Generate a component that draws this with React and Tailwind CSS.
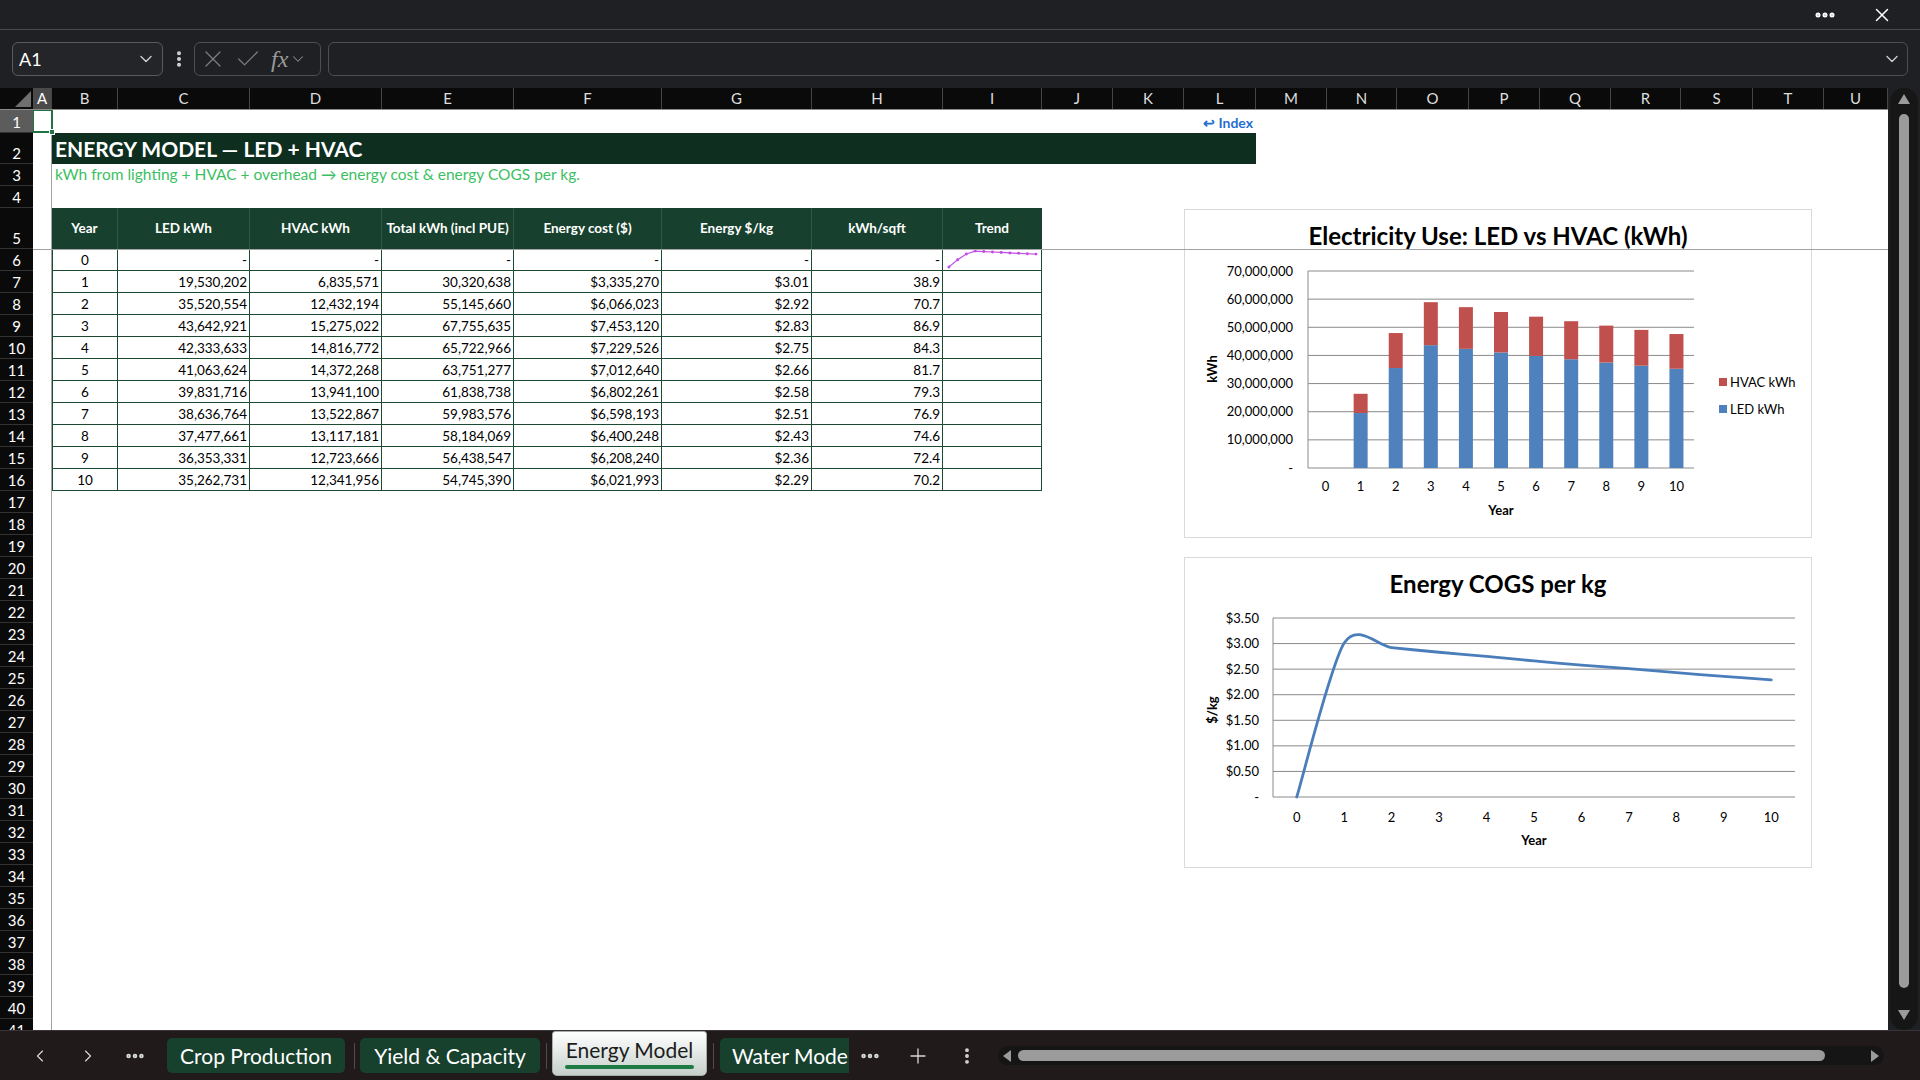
import { ChevronDown, ChevronLeft, ChevronRight, X, Check, Ellipsis, EllipsisVertical, Plus } from 'lucide-react';

const YEARS = [0, 1, 2, 3, 4, 5, 6, 7, 8, 9, 10];
const LED = [0, 19530202, 35520554, 43642921, 42333633, 41063624, 39831716, 38636764, 37477661, 36353331, 35262731];
const HVAC = [0, 6835571, 12432194, 15275022, 14816772, 14372268, 13941100, 13522867, 13117181, 12723666, 12341956];
const TOTAL = [0, 30320638, 55145660, 67755635, 65722966, 63751277, 61838738, 59983576, 58184069, 56438547, 54745390];
const COST = [0, 3335270, 6066023, 7453120, 7229526, 7012640, 6802261, 6598193, 6400248, 6208240, 6021993];
const PER_KG = [0, 3.01, 2.92, 2.83, 2.75, 2.66, 2.58, 2.51, 2.43, 2.36, 2.29];
const PER_SQFT = [0, 38.9, 70.7, 86.9, 84.3, 81.7, 79.3, 76.9, 74.6, 72.4, 70.2];

const fmtInt = n => (n === 0 ? '-' : n.toLocaleString('en-US'));
const fmtMoney = n => (n === 0 ? '-' : '$' + n.toLocaleString('en-US'));
const fmtKg = n => (n === 0 ? '-' : '$' + n.toFixed(2));
const fmtSqft = n => (n === 0 ? '-' : n.toFixed(1));

const COLUMNS = [
  { name: 'A', w: 'w-[19px]' },
  { name: 'B', w: 'w-[66px]' },
  { name: 'C', w: 'w-[132px]' },
  { name: 'D', w: 'w-[132px]' },
  { name: 'E', w: 'w-[132px]' },
  { name: 'F', w: 'w-[148px]' },
  { name: 'G', w: 'w-[150px]' },
  { name: 'H', w: 'w-[131px]' },
  { name: 'I', w: 'w-[99px]' },
  { name: 'J', w: 'w-[71px]' },
  { name: 'K', w: 'w-[71px]' },
  { name: 'L', w: 'w-[72px]' },
  { name: 'M', w: 'w-[71px]' },
  { name: 'N', w: 'w-[70px]' },
  { name: 'O', w: 'w-[72px]' },
  { name: 'P', w: 'w-[71px]' },
  { name: 'Q', w: 'w-[71px]' },
  { name: 'R', w: 'w-[70px]' },
  { name: 'S', w: 'w-[72px]' },
  { name: 'T', w: 'w-[71px]' },
  { name: 'U', w: 'w-[64px]' },
];

const ROW_HEIGHTS = { 1: 'h-[23px]', 2: 'h-[31px]', 5: 'h-[41px]' };
const ROW_NUMBERS = Array.from({ length: 41 }, (_, i) => i + 1);

const TABLE_COLS = [
  { label: 'Year', w: 'w-[66px]' },
  { label: 'LED kWh', w: 'w-[132px]' },
  { label: 'HVAC kWh', w: 'w-[132px]' },
  { label: 'Total kWh (incl PUE)', w: 'w-[132px]' },
  { label: 'Energy cost ($)', w: 'w-[148px]' },
  { label: 'Energy $/kg', w: 'w-[150px]' },
  { label: 'kWh/sqft', w: 'w-[131px]' },
  { label: 'Trend', w: 'w-[99px]' },
];

// catmull-rom style smoothing, close to Excel's "smoothed line"
function smoothPath(pts, k = 0.14) {
  let d = `M${pts[0][0]},${pts[0][1]}`;
  for (let i = 0; i < pts.length - 1; i++) {
    const p0 = pts[i - 1] || pts[i];
    const p1 = pts[i];
    const p2 = pts[i + 1];
    const p3 = pts[i + 2] || p2;
    const c1 = [p1[0] + (p2[0] - p0[0]) * k, p1[1] + (p2[1] - p0[1]) * k];
    const c2 = [p2[0] - (p3[0] - p1[0]) * k, p2[1] - (p3[1] - p1[1]) * k];
    d += ` C${c1[0]},${c1[1]} ${c2[0]},${c2[1]} ${p2[0]},${p2[1]}`;
  }
  return d;
}

function TitleBar() {
  return (
    <div className="h-[30px] shrink-0 flex items-center justify-end pr-[27px] gap-[34px] border-b border-[#4a4a4a]">
      <Ellipsis size={24} strokeWidth={3} className="text-white" />
      <X size={22} strokeWidth={1.6} className="text-white" />
    </div>
  );
}

function FormulaBar() {
  return (
    <div className="h-[58px] shrink-0 flex items-center px-[12px]">
      <div className="w-[151px] h-[34px] rounded-[6px] border border-[#5a5a5a] bg-[#242528] flex items-center justify-between pl-[6px] pr-[6px]">
        <span className="text-[18px] text-white">A1</span>
        <ChevronDown size={20} strokeWidth={1.6} className="text-[#d0d0d0]" />
      </div>
      <EllipsisVertical size={20} strokeWidth={2.8} className="ml-[6px] text-[#d8d8d8]" />
      <div className="ml-[5px] w-[127px] h-[34px] rounded-[6px] border border-[#4e4e4e] flex items-center pl-[4px]">
        <X size={28} strokeWidth={1.1} className="text-[#7d7d7d]" />
        <Check size={28} strokeWidth={1.1} className="ml-[7px] text-[#7d7d7d]" />
        <span className="ml-[9px] text-[24px] italic font-['Liberation_Serif',serif] text-[#9a9a9a] leading-none">fx</span>
        <ChevronDown size={18} strokeWidth={1.4} className="ml-[1px] text-[#8a8a8a]" />
      </div>
      <div className="ml-[7px] flex-1 h-[34px] rounded-[6px] border border-[#4e4e4e] flex items-center justify-end pr-[5px]">
        <ChevronDown size={20} strokeWidth={1.6} className="text-[#cfcfcf]" />
      </div>
    </div>
  );
}

function ColumnHeaders() {
  return (
    <div className="h-[22px] shrink-0 flex bg-[#0a0a0a] border-b border-[#8a8a8a]">
      <div className="w-[33px] shrink-0 flex items-end justify-end pr-[2px] pb-[2px]">
        <svg width="16" height="16" viewBox="0 0 16 16">
          <polygon points="16,0 16,16 0,16" fill="#6f6f6f" />
        </svg>
      </div>
      {COLUMNS.map(c => (
        <div
          key={c.name}
          className={`${c.w} shrink-0 flex items-center justify-center text-[15px] border-r border-[#454545] ${
            c.name === 'A' ? 'bg-[#4a4a4a] text-white' : 'text-[#dedede]'
          }`}
        >
          {c.name}
        </div>
      ))}
    </div>
  );
}

function RowHeaders() {
  return (
    <div className="w-[33px] shrink-0 flex flex-col bg-[#0a0a0a]">
      {ROW_NUMBERS.map(n => (
        <div
          key={n}
          className={`${ROW_HEIGHTS[n] || 'h-[22px]'} shrink-0 flex items-end justify-center pb-[1px] text-[15px] leading-[18px] border-b border-[#333333] ${
            n === 1 ? 'bg-[#5c5c5c] text-white' : 'text-white'
          }`}
        >
          {n}
        </div>
      ))}
    </div>
  );
}

function Sparkline({ values }) {
  const max = Math.max(...values);
  const pts = values.map((v, i) => [6 + i * 8.8, 19 - (v / max) * 16]);
  return (
    <svg width="97" height="21" viewBox="0 0 97 21">
      <polyline points={pts.map(p => p.join(',')).join(' ')} fill="none" stroke="#c24be6" strokeWidth="1.2" />
      {pts.map((p, i) => (
        <circle key={i} cx={p[0]} cy={p[1]} r="1.5" fill="#c24be6" />
      ))}
    </svg>
  );
}

function EnergyTable() {
  const rows = YEARS.map(y => [
    String(y),
    fmtInt(LED[y]),
    fmtInt(HVAC[y]),
    fmtInt(TOTAL[y]),
    fmtMoney(COST[y]),
    fmtKg(PER_KG[y]),
    fmtSqft(PER_SQFT[y]),
  ]);

  return (
    <div className="w-[990px] flex flex-col">
      <div className="h-[41px] flex bg-[#17412e]">
        {TABLE_COLS.map((c, i) => (
          <div
            key={c.label}
            className={`${c.w} shrink-0 flex items-center justify-center text-[13.5px] font-bold text-white whitespace-nowrap border-r ${
              i === TABLE_COLS.length - 1 ? 'border-[#17412e]' : 'border-[#2d5c44]'
            }`}
          >
            {c.label}
          </div>
        ))}
      </div>
      {rows.map((r, ri) => (
        <div key={ri} className="h-[22px] flex">
          {TABLE_COLS.map((c, ci) => (
            <div
              key={c.label}
              className={`${c.w} shrink-0 flex items-end pb-[1px] text-[13.5px] leading-[18px] text-black border-r border-b border-[#1d4a33] ${
                ci === 0 ? 'border-l justify-center' : 'justify-end pr-[2px]'
              }`}
            >
              {ci < 7 ? r[ci] : ri === 0 ? <Sparkline values={PER_SQFT} /> : null}
            </div>
          ))}
        </div>
      ))}
    </div>
  );
}

function UsageChart() {
  const px = 124, py = 62, pw = 386, ph = 197;
  const max = 70000000;
  const cw = pw / 11;
  const bw = 14;
  const font = 'Lato, sans-serif';
  return (
    <div className="absolute left-[1151px] top-[99px] w-[628px] h-[329px] bg-white border border-[#d9d9d9]">
      <svg width="626" height="327" viewBox="1 1 626 327" fontFamily={font}>
        <text x="314" y="36" textAnchor="middle" fontSize="24" fontWeight="700" fill="#000">
          Electricity Use: LED vs HVAC (kWh)
        </text>
        {Array.from({ length: 8 }, (_, i) => {
          const y = py + ph - (i * ph) / 7;
          return (
            <g key={i}>
              <line x1={px} x2={px + pw} y1={y} y2={y} stroke="#8a8a8a" strokeWidth="1" />
              <text x={px - 15} y={y + 4.5} textAnchor="end" fontSize="13" fill="#000">
                {i === 0 ? '-' : (i * 10000000).toLocaleString('en-US')}
              </text>
            </g>
          );
        })}
        <line x1={px} x2={px} y1={py} y2={py + ph} stroke="#8a8a8a" strokeWidth="1" />
        {YEARS.map(y => {
          const cx = px + cw * y + cw / 2;
          const hl = (LED[y] / max) * ph;
          const hh = (HVAC[y] / max) * ph;
          return (
            <g key={y}>
              {hl > 0 && <rect x={cx - bw / 2} y={py + ph - hl} width={bw} height={hl} fill="#4f81bd" />}
              {hh > 0 && <rect x={cx - bw / 2} y={py + ph - hl - hh} width={bw} height={hh} fill="#c0504d" />}
              <text x={cx} y={py + ph + 23} textAnchor="middle" fontSize="13" fill="#000">{y}</text>
            </g>
          );
        })}
        <text x={px + pw / 2} y={306} textAnchor="middle" fontSize="13" fontWeight="700" fill="#000">Year</text>
        <text x="0" y="0" transform="translate(33,160) rotate(-90)" textAnchor="middle" fontSize="13" fontWeight="700" fill="#000">kWh</text>
        <rect x="535" y="169" width="8" height="8" fill="#c0504d" />
        <text x="546" y="178" fontSize="13" fill="#000">HVAC kWh</text>
        <rect x="535" y="196" width="8" height="8" fill="#4f81bd" />
        <text x="546" y="205" fontSize="13" fill="#000">LED kWh</text>
      </svg>
    </div>
  );
}

function CogsChart() {
  const px = 89, py = 61, pw = 522, ph = 179;
  const max = 3.5;
  const cw = pw / 11;
  const font = 'Lato, sans-serif';
  const pts = YEARS.map(y => [px + cw * y + cw / 2, py + ph - (PER_KG[y] / max) * ph]);
  return (
    <div className="absolute left-[1151px] top-[447px] w-[628px] h-[311px] bg-white border border-[#d9d9d9]">
      <svg width="626" height="309" viewBox="1 1 626 309" fontFamily={font}>
        <text x="314" y="36" textAnchor="middle" fontSize="24" fontWeight="700" fill="#000">
          Energy COGS per kg
        </text>
        {Array.from({ length: 8 }, (_, i) => {
          const y = py + ph - (i * ph) / 7;
          return (
            <g key={i}>
              <line x1={px} x2={px + pw} y1={y} y2={y} stroke="#8a8a8a" strokeWidth="1" />
              <text x={px - 14} y={y + 4.5} textAnchor="end" fontSize="13" fill="#000">
                {i === 0 ? '-' : '$' + (i * 0.5).toFixed(2)}
              </text>
            </g>
          );
        })}
        <line x1={px} x2={px} y1={py} y2={py + ph} stroke="#8a8a8a" strokeWidth="1" />
        {YEARS.map(y => (
          <text key={y} x={px + cw * y + cw / 2} y={py + ph + 25} textAnchor="middle" fontSize="13" fill="#000">{y}</text>
        ))}
        <path d={smoothPath(pts)} fill="none" stroke="#4a7ebb" strokeWidth="2.8" strokeLinecap="round" />
        <text x={px + pw / 2} y={288} textAnchor="middle" fontSize="13" fontWeight="700" fill="#000">Year</text>
        <text x="0" y="0" transform="translate(33,153) rotate(-90)" textAnchor="middle" fontSize="13" fontWeight="700" fill="#000">$/kg</text>
      </svg>
    </div>
  );
}

function Sheet() {
  return (
    <div className="flex-1 relative bg-white overflow-hidden text-black">
      <div className="pl-[19px] flex flex-col">
        <div className="h-[23px] w-[1204px] flex items-end justify-end pr-[3px] pb-[3px]">
          <span className="text-[14px] font-bold text-[#1f6fd1] leading-none">↩ Index</span>
        </div>
        <div className="h-[31px] w-[1204px] bg-[#0e2e1f] flex items-center pl-[3px]">
          <span className="text-[21px] font-bold text-white">ENERGY MODEL — LED + HVAC</span>
        </div>
        <div className="h-[22px] flex items-center pl-[3px]">
          <span className="text-[15.5px] text-[#3cbf63]">kWh from lighting + HVAC + overhead → energy cost &amp; energy COGS per kg.</span>
        </div>
        <div className="h-[22px]" />
        <EnergyTable />
      </div>

      <UsageChart />
      <CogsChart />

      {/* frozen panes */}
      <div className="absolute left-0 right-0 top-[139px] h-px bg-[#a3a3a3] z-10" />
      <div className="absolute top-0 bottom-0 left-[18px] w-px bg-[#a3a3a3] z-10" />

      {/* active cell A1 */}
      <div className="absolute -left-[1px] -top-[1px] w-[21px] h-[24px] border-2 border-[#217346] z-20">
        <div className="absolute -right-[4px] -bottom-[4px] w-[6px] h-[6px] bg-[#217346] border border-white" />
      </div>
    </div>
  );
}

function VScroll() {
  return (
    <div className="w-[32px] shrink-0 flex justify-center">
      <div className="w-[28px] h-full rounded-[14px] bg-[#161616] flex flex-col items-center pt-[6px] pb-[6px]">
        <svg width="12" height="10" viewBox="0 0 12 10">
          <polygon points="6,0 12,10 0,10" fill="#9b9b9b" />
        </svg>
        <div className="mt-[10px] w-[10px] flex-1 rounded-full bg-[#9b9b9b]" />
        <svg width="12" height="10" viewBox="0 0 12 10" className="mt-[22px] mb-[4px]">
          <polygon points="0,0 12,0 6,10" fill="#9b9b9b" />
        </svg>
      </div>
    </div>
  );
}

function TabBar() {
  return (
    <div className="h-[50px] shrink-0 flex items-center bg-[#211a1a] border-t border-[#3b3434] text-white">
      <ChevronLeft size={20} strokeWidth={1.4} className="ml-[30px] text-[#d8d8d8]" />
      <ChevronRight size={20} strokeWidth={1.4} className="ml-[28px] text-[#d8d8d8]" />
      <Ellipsis size={22} strokeWidth={3} className="ml-[26px] text-[#d8d8d8]" />

      <div className="ml-[21px] w-[178px] h-[35px] rounded-[5px] bg-[#17402d] flex items-center justify-center text-[21px]">
        Crop Production
      </div>
      <div className="ml-[9px] mr-[5px] w-px h-[26px] bg-[#4d4d4d]" />
      <div className="w-[180px] h-[35px] rounded-[5px] bg-[#17402d] flex items-center justify-center text-[21px]">
        Yield &amp; Capacity
      </div>
      <div className="ml-[6px] mr-[5px] w-px h-[26px] bg-[#4d4d4d]" />
      <div className="self-start w-[155px] h-[45px] rounded-b-[5px] rounded-t-[3px] border border-[#a5aeaa] bg-gradient-to-b from-white to-[#c6d0cb] flex flex-col items-center pt-[5px]">
        <span className="text-[21px] text-[#1c1c1c] leading-[25px]">Energy Model</span>
        <div className="mt-[3px] w-[129px] h-[4px] rounded-full bg-[#1e7b45]" />
      </div>
      <div className="ml-[6px] mr-[6px] w-px h-[26px] bg-[#4d4d4d]" />
      <div className="w-[129px] h-[35px] rounded-l-[5px] bg-[#17402d] flex items-center pl-[12px] overflow-hidden whitespace-nowrap text-[21px]">
        Water Model
      </div>
      <Ellipsis size={22} strokeWidth={3} className="ml-[10px] text-[#d8d8d8]" />
      <Plus size={24} strokeWidth={1.3} className="ml-[25px] text-[#d8d8d8]" />
      <EllipsisVertical size={20} strokeWidth={2.6} className="ml-[27px] text-[#d8d8d8]" />

      <div className="ml-[21px] w-[886px] h-[19px] rounded-full bg-[#151515] flex items-center px-[5px]">
        <svg width="8" height="12" viewBox="0 0 8 12">
          <polygon points="8,0 8,12 0,6" fill="#9b9b9b" />
        </svg>
        <div className="ml-[7px] w-[807px] h-[11px] rounded-full bg-[#9b9b9b]" />
        <div className="flex-1" />
        <svg width="8" height="12" viewBox="0 0 8 12">
          <polygon points="0,0 8,6 0,12" fill="#9b9b9b" />
        </svg>
      </div>
    </div>
  );
}

export default function App() {
  return (
    <div className="w-[1920px] h-[1080px] overflow-hidden flex flex-col bg-[#1f2023] font-[Lato,sans-serif] text-white">
      <TitleBar />
      <FormulaBar />
      <div className="h-[942px] shrink-0 flex">
        <div className="w-[1888px] flex flex-col">
          <ColumnHeaders />
          <div className="flex h-[920px] overflow-hidden">
            <RowHeaders />
            <Sheet />
          </div>
        </div>
        <VScroll />
      </div>
      <TabBar />
    </div>
  );
}
